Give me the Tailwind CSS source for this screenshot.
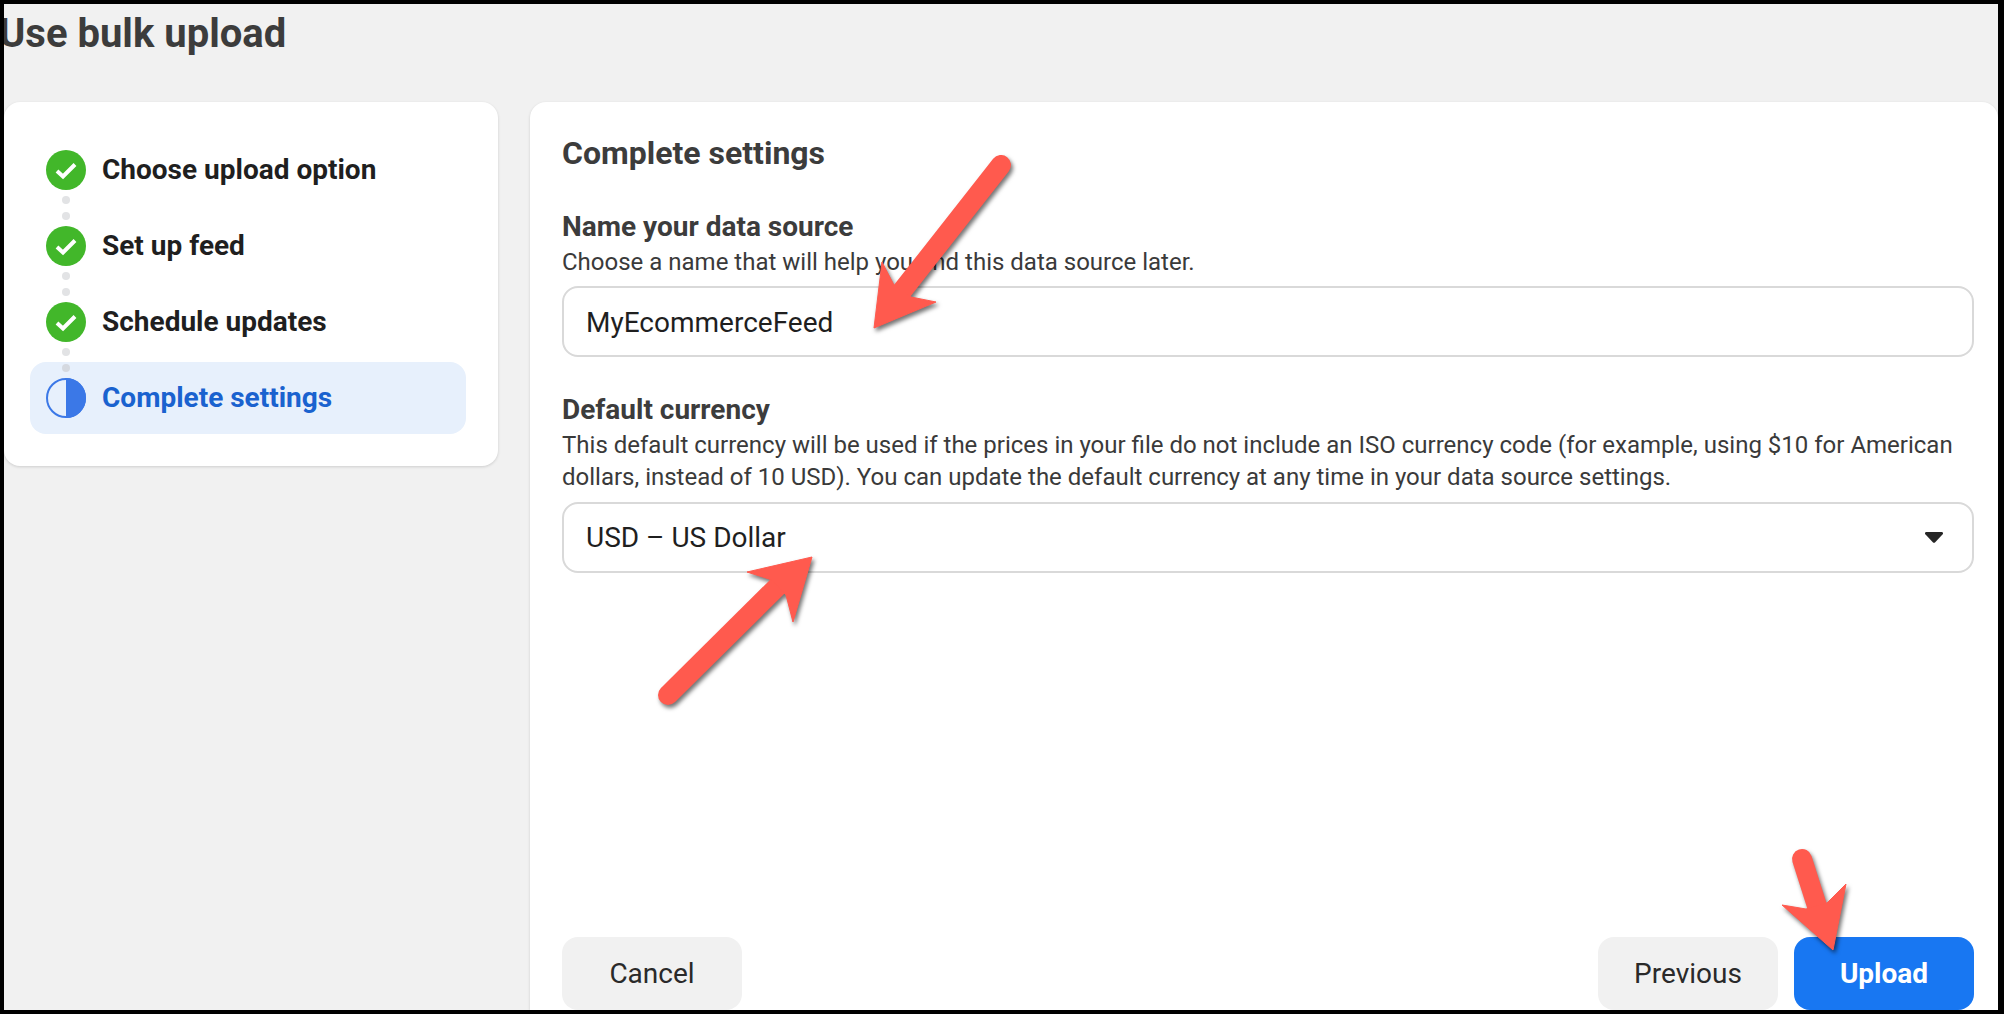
<!DOCTYPE html>
<html lang="en">

<head>
  <meta charset="UTF-8">
  <title>Use bulk upload</title>
  <script src="https://cdn.jsdelivr.net/npm/@tailwindcss/browser@4"></script>
</head>

<body class="bg-black">
  <div class="relative w-[2004px] h-[1014px] overflow-hidden bg-[#f1f1f1] border-t-4 border-l-4 border-r-[6px] border-b-4 border-black font-['Roboto',sans-serif]">
    <h1 class="-ml-[5px] h-[98px] text-[40px] leading-[60px] font-bold text-[#3c3c3c] whitespace-nowrap">Use bulk upload</h1>

    <div class="flex gap-8 h-[908px] items-start">
      <!-- Steps -->
      <aside class="w-[494px] shrink-0 bg-white rounded-2xl shadow-[0_1px_3px_rgba(0,0,0,0.15)] pt-12 pb-8 pl-[26px] pr-8">
        <div class="flex items-center gap-4 px-4">
          <svg class="w-10 h-10 shrink-0" viewBox="0 0 40 40"><circle cx="20" cy="20" r="20" fill="#42b72a" /><path d="M11 21l6 5.5L29 14.5" fill="none" stroke="#fff" stroke-width="4" /></svg>
          <span class="text-[28px] leading-10 font-bold text-[#1f1f1f]">Choose upload option</span>
        </div>
        <div class="flex flex-col gap-2 py-[6px] pl-8"><i class="w-2 h-2 rounded-full bg-[#e2e3e5]"></i><i class="w-2 h-2 rounded-full bg-[#e2e3e5]"></i></div>
        <div class="flex items-center gap-4 px-4">
          <svg class="w-10 h-10 shrink-0" viewBox="0 0 40 40"><circle cx="20" cy="20" r="20" fill="#42b72a" /><path d="M11 21l6 5.5L29 14.5" fill="none" stroke="#fff" stroke-width="4" /></svg>
          <span class="text-[28px] leading-10 font-bold text-[#1f1f1f]">Set up feed</span>
        </div>
        <div class="flex flex-col gap-2 py-[6px] pl-8"><i class="w-2 h-2 rounded-full bg-[#e2e3e5]"></i><i class="w-2 h-2 rounded-full bg-[#e2e3e5]"></i></div>
        <div class="flex items-center gap-4 px-4">
          <svg class="w-10 h-10 shrink-0" viewBox="0 0 40 40"><circle cx="20" cy="20" r="20" fill="#42b72a" /><path d="M11 21l6 5.5L29 14.5" fill="none" stroke="#fff" stroke-width="4" /></svg>
          <span class="text-[28px] leading-10 font-bold text-[#1f1f1f]">Schedule updates</span>
        </div>
        <div class="relative z-10 flex flex-col gap-2 py-[6px] pl-8"><i class="w-2 h-2 rounded-full bg-[#e2e3e5]"></i><i class="w-2 h-2 rounded-full bg-[#d5d9e0]"></i></div>
        <div class="-mt-4 flex items-center gap-4 p-4 rounded-2xl bg-[#e7f0fc]">
          <svg class="w-10 h-10 shrink-0" viewBox="0 0 40 40"><circle cx="20" cy="20" r="19" fill="none" stroke="#3b78e7" stroke-width="2" /><path d="M20 0a20 20 0 0 1 0 40z" fill="#3b78e7" /></svg>
          <span class="text-[28px] leading-10 font-bold text-[#1a62cf]">Complete settings</span>
        </div>
      </aside>

      <!-- Form -->
      <main class="flex-1 h-full flex flex-col bg-white rounded-t-2xl shadow-[0_1px_3px_rgba(0,0,0,0.15)] pt-[33px] pl-8 pr-6">
        <h2 class="text-[32px] leading-9 font-bold text-[#3c3c3c] mb-[39px]">Complete settings</h2>

        <label class="text-[28px] leading-[34px] font-bold text-[#3c3c3c]">Name your data source</label>
        <p class="text-2xl leading-8 text-[#3a3a3a] mt-[2px] mb-2">Choose a name that will help you find this data source later.</p>
        <input value="MyEcommerceFeed" class="w-full h-[71px] shrink-0 px-[22px] pt-[2px] rounded-2xl border-2 border-[#d9d9d9] text-[28px] text-[#1f1f1f] outline-none">

        <label class="mt-9 text-[28px] leading-[34px] font-bold text-[#3c3c3c]">Default currency</label>
        <p class="text-2xl leading-[32.4px] text-[#3a3a3a] mt-[2px] mb-2">This default currency will be used if the prices in your file do not include an ISO currency code (for example, using $10 for American dollars, instead of 10 USD). You can update the default currency at any time in your data source settings.</p>
        <div class="w-full h-[71px] shrink-0 flex items-center justify-between pl-[22px] pr-[29px] rounded-2xl border-2 border-[#d9d9d9] text-[28px] text-[#1f1f1f]">
          <span class="pt-[2px]">USD – US Dollar</span>
          <svg class="w-[18px] h-[11px]" viewBox="0 0 18 11"><path d="M1.5 0h15c1.3 0 2 1.3 1.2 2.2L10.2 10.2c-.7.7-1.7.7-2.4 0L.3 2.2C-.5 1.3.2 0 1.5 0z" fill="#262626" /></svg>
        </div>

        <div class="mt-auto flex items-center gap-4">
          <button class="w-[180px] h-[73px] rounded-2xl bg-[#f1f1f1] text-[28px] text-[#2a2a2a] mr-auto">Cancel</button>
          <button class="w-[180px] h-[73px] rounded-2xl bg-[#f1f1f1] text-[28px] text-[#2a2a2a]">Previous</button>
          <button class="w-[180px] h-[73px] rounded-2xl bg-[#1877f2] text-[28px] font-bold text-white">Upload</button>
        </div>
      </main>
    </div>

    <!-- Annotation arrows, drawn over the screenshot -->
    <svg class="absolute -left-1 -top-1 w-[2004px] h-[1014px] pointer-events-none drop-shadow-[2px_3px_2px_rgba(0,0,0,0.55)]" viewBox="0 0 2004 1014">
      <g fill="#ff5a4e" stroke="#ff5a4e">
        <path d="M1001 165L902 291" fill="none" stroke-width="20" stroke-linecap="round" />
        <path d="M874 328L882 262L894 285L911 297L936 302Z" stroke-width="1" />
        <path d="M668 695L778 586" fill="none" stroke-width="20" stroke-linecap="round" />
        <path d="M812 557L747 572L772 580L786 595L793 622Z" stroke-width="1" />
        <path d="M1802 859L1817 906" fill="none" stroke-width="20" stroke-linecap="round" />
        <path d="M1833 950L1782 905L1806 909L1827 903L1846 884Z" stroke-width="1" />
      </g>
    </svg>
  </div>
</body>

</html>
